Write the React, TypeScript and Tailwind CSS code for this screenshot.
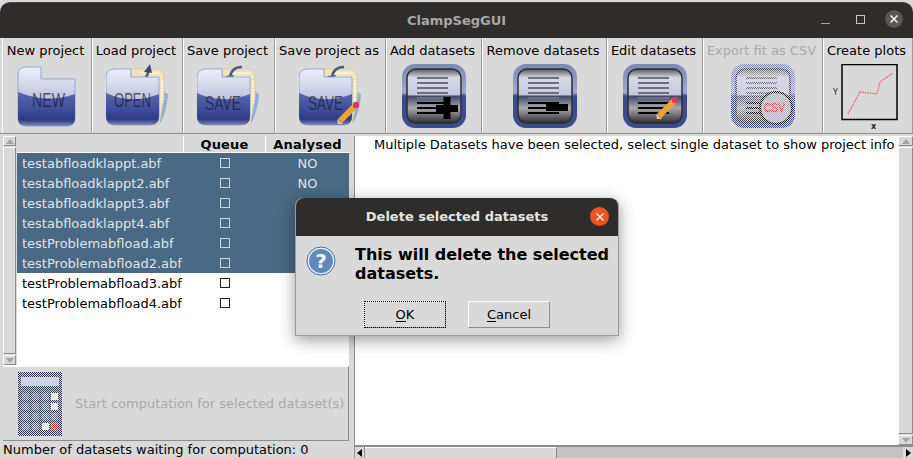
import type { ReactNode } from "react";

const font = { fontFamily: '"DejaVu Sans", sans-serif' };

// folder body, shared by the four project buttons
function FolderIcon({
  label,
  textX,
  textW,
  baseline,
  back,
  pencil,
  arrow,
}: {
  label: string;
  textX: number;
  textW: number;
  baseline: number;
  back?: boolean;
  pencil?: boolean;
  arrow?: "up" | "back";
}) {
  return (
    <svg width="64" height="64" viewBox="0 0 64 64">
      {back && (
        <>
          <path d="M52 24 L62 30 Q61 46 55 58 L46 60z" fill="#8fb0d2" />
          <path d="M25 5H50Q58 5 58 13V34L53 60H30z" fill="#efe3bd" stroke="#d9cfa8" />
          <path d="M34 9H54M36 13H56" stroke="#fbf6e4" strokeWidth="1.5" />
          <path d="M56 16V40" stroke="#fbf6e4" strokeWidth="2" strokeDasharray="2 1" />
        </>
      )}
      {arrow === "up" && <path d="M33 15Q42 16 42 7" stroke="#4b5a80" strokeWidth="2.5" fill="none" />}
      {arrow === "up" && <path d="M38 8L44 0L46 9z" fill="#3d4a70" />}
      {arrow === "back" && <path d="M33 14Q34 3 45 3" stroke="#4b5a80" strokeWidth="2.5" fill="none" />}
      {arrow === "back" && <path d="M28 12L37 11L34 17z" fill="#4b5a80" />}
      <path
        d={back ? "M9 5H25V13H53V52Q53 61 44 61H9Q0 61 0 52V14Q0 5 9 5z" : "M11 3H26V15H60V54Q60 62 52 62H11Q3 62 3 54V11Q3 3 11 3z"}
        fill="url(#folderLight)"
        stroke="#8fadcf"
      />
      <path
        d={back ? "M0 29Q26 41 53 30V52Q53 61 44 61H9Q0 61 0 52z" : "M3 28Q32 40 60 30V54Q60 62 52 62H11Q3 62 3 54z"}
        fill="url(#folderDark)"
      />
      <text x={textX} y={baseline} fontSize="20" fontFamily="Liberation Sans" fill="#15192a" fillOpacity="0.7" textLength={textW} lengthAdjust="spacingAndGlyphs">
        {label}
      </text>
      {pencil && <Pencil x1={41} y1={57} x2={56} y2={42} />}
    </svg>
  );
}

function Pencil({ x1, y1, x2, y2 }: { x1: number; y1: number; x2: number; y2: number }) {
  return (
    <>
      <path d={`M${x1} ${y1}L${x2} ${y2}`} stroke="#eda531" strokeWidth="6" strokeLinecap="butt" />
      <path d={`M${x1 - 2} ${y1 + 3}L${x1 - 3} ${y1 - 2}L${x1 + 3} ${y1 + 3}z`} fill="#e7c68f" />
      <circle cx={x2 + 1} cy={y2 - 1} r="3.2" fill="#d63c60" />
    </>
  );
}

// document buttons: add, remove, edit and the disabled export
function DocIcon({ children }: { children?: ReactNode }) {
  return (
    <>
      <rect x="0" y="0" width="64" height="64" rx="13" fill="url(#docFrame)" />
      <rect x="5" y="5" width="54" height="54" rx="9" fill="url(#docFace)" stroke="#2e2e30" strokeWidth="1.5" />
      {[14, 19, 24, 29, 34].map((y) => (
        <rect key={y} x="15" y={y - 1} width="31" height="2" fill="#6f6f74" />
      ))}
      {[38, 43, 48].map((y) => (
        <rect key={y} x="15" y={y} width="31" height="2" fill="#000" />
      ))}
      {children}
    </>
  );
}

function DocSvg({ children }: { children?: ReactNode }) {
  return (
    <svg width="64" height="64" viewBox="0 0 64 64">
      {children}
    </svg>
  );
}

function CalcIcon() {
  const rows = [395, 405, 415, 425];
  const cols = [25, 35, 45, 54];
  return (
    <svg width="44" height="64" viewBox="18 371 44 64" shapeRendering="crispEdges" className="shrink-0">
      <rect x="18" y="371" width="44" height="64" fill="#2a3350" />
      <rect x="21" y="376" width="38" height="9" fill="#c5cce0" />
      {rows.map((y, r) =>
        cols.map((x, c) => {
          const white = (c === 3 && r < 2) || (c === 2 && r === 3);
          const red = c === 3 && r === 3;
          return <rect key={`${r}-${c}`} x={x - 3} y={y - 3} width="7" height="7" fill={red ? "#e03030" : white ? "#ffffff" : "#5c6480"} />;
        })
      )}
      <rect x="18" y="371" width="44" height="64" fill="url(#dither)" />
    </svg>
  );
}

function ToolButton({ label, width, disabled, children }: { label: string; width: string; disabled?: boolean; children: ReactNode }) {
  return (
    <div className={`${width} shrink-0 flex flex-col items-center border-r border-r-[#9c9c9c] border-l border-l-white`}>
      <div className={`h-[26px] pr-[3px] leading-[26px] text-[13px] whitespace-nowrap ${disabled ? "text-[#a8a8a8]" : "text-black"}`}>{label}</div>
      {children}
    </div>
  );
}

function Arrow({ dir, muted = true }: { dir: "up" | "down" | "left" | "right"; muted?: boolean }) {
  const pts = { up: "0,5 4,0 8,5", down: "0,0 8,0 4,5", left: "5,0 5,8 0,4", right: "0,0 0,8 5,4" }[dir];
  const box = dir === "up" || dir === "down" ? "0 0 8 5" : "0 0 5 8";
  const size = dir === "up" || dir === "down" ? { w: 8, h: 5 } : { w: 5, h: 8 };
  return (
    <svg width={size.w} height={size.h} viewBox={box}>
      <polygon points={pts} fill={muted ? "#a3a3a3" : "#000"} />
    </svg>
  );
}

function VScroll({ width }: { width: string }) {
  return (
    <div className={`${width} shrink-0 flex flex-col gap-px`}>
      <div className="h-[10px] flex items-center justify-center border border-t-white border-l-white border-r-[#8c8c8c] border-b-[#8c8c8c]">
        <Arrow dir="up" />
      </div>
      <div className="flex-1 border border-t-white border-l-white border-r-[#8c8c8c] border-b-[#8c8c8c]" />
      <div className="h-[10px] flex items-center justify-center border border-t-white border-l-white border-r-[#8c8c8c] border-b-[#8c8c8c]">
        <Arrow dir="down" />
      </div>
    </div>
  );
}

const files = [
  ["testabfloadklappt.abf", true],
  ["testabfloadklappt2.abf", true],
  ["testabfloadklappt3.abf", true],
  ["testabfloadklappt4.abf", true],
  ["testProblemabfload.abf", true],
  ["testProblemabfload2.abf", true],
  ["testProblemabfload3.abf", false],
  ["testProblemabfload4.abf", false],
] as const;

export default function App() {
  return (
    <div className="relative w-[913px] h-[458px] overflow-hidden bg-[#d9d9d9] text-black" style={font}>
      {/* shared paints for the icons */}
      <svg className="absolute w-0 h-0">
        <defs>
          <linearGradient id="folderLight" x1="0" y1="0" x2="0" y2="1">
            <stop offset="0" stopColor="#eef0fa" />
            <stop offset="0.6" stopColor="#b9bedb" />
          </linearGradient>
          <linearGradient id="folderDark" x1="0" y1="0" x2="0" y2="1">
            <stop offset="0" stopColor="#5a67b0" />
            <stop offset="0.55" stopColor="#3d4c9a" />
            <stop offset="0.82" stopColor="#2c3a80" />
            <stop offset="1" stopColor="#8289bd" />
          </linearGradient>
          <linearGradient id="docFrame" x1="0" y1="0" x2="0" y2="1">
            <stop offset="0" stopColor="#7d88b8" />
            <stop offset="0.45" stopColor="#a0a8cc" />
            <stop offset="0.5" stopColor="#3c4a8e" />
            <stop offset="1" stopColor="#3c4a8e" />
          </linearGradient>
          <linearGradient id="docFace" x1="0" y1="0" x2="0" y2="1">
            <stop offset="0" stopColor="#55555a" />
            <stop offset="0.16" stopColor="#d7d8e8" />
            <stop offset="0.48" stopColor="#c6c8e0" />
            <stop offset="0.5" stopColor="#3e4668" />
            <stop offset="0.72" stopColor="#a9a9ae" />
            <stop offset="1" stopColor="#2f2f33" />
          </linearGradient>
          <pattern id="dither" width="2" height="2" patternUnits="userSpaceOnUse">
            <rect x="0" y="0" width="1" height="1" fill="#d9d9d9" />
            <rect x="1" y="1" width="1" height="1" fill="#d9d9d9" />
          </pattern>
        </defs>
      </svg>

      {/* title bar */}
      <div className="h-[38px] pt-[2px] bg-[#d9d9d9]">
        <div className="relative h-[36px] rounded-t-[10px] bg-[#2f2d2c] flex items-center justify-center border-t border-[#4a4847]">
          <span className="text-[13px] font-bold text-[#a9a7a3]">ClampSegGUI</span>
          <div className="absolute right-[10px] top-[7px] flex items-center">
            <svg width="9" height="9" viewBox="0 0 9 9">
              <rect x="0" y="8" width="9" height="1" fill="#a9a7a3" />
            </svg>
            <svg width="9" height="9" viewBox="0 0 9 9" fill="none" className="ml-[26px]">
              <rect x="0.5" y="0.5" width="8" height="8" stroke="#c9c7c3" />
            </svg>
            <div className="ml-[20px] w-[18px] h-[18px] rounded-full bg-[#5a5856] flex items-center justify-center">
              <svg width="8" height="8" viewBox="0 0 8 8" stroke="#f2f2f2" strokeWidth="1.5">
                <path d="M0.5 0.5L7.5 7.5M7.5 0.5L0.5 7.5" />
              </svg>
            </div>
          </div>
        </div>
      </div>

      {/* toolbar */}
      <div className="h-[96px] pl-[2px] flex border-b border-[#8c8c8c]">
        <ToolButton label="New project" width="w-[90px]">
          <FolderIcon label="NEW" textX={17} textW={33} baseline={43} />
        </ToolButton>
        <ToolButton label="Load project" width="w-[91px]">
          <FolderIcon label="OPEN" textX={8} textW={37} baseline={43} back arrow="up" />
        </ToolButton>
        <ToolButton label="Save project" width="w-[92px]">
          <FolderIcon label="SAVE" textX={8} textW={36} baseline={46} back arrow="back" />
        </ToolButton>
        <ToolButton label="Save project as" width="w-[111px]">
          <FolderIcon label="SAVE" textX={9} textW={35} baseline={46} back arrow="back" pencil />
        </ToolButton>
        <ToolButton label="Add datasets" width="w-[96px]">
          <DocSvg>
            <DocIcon>
              <rect x="34" y="41" width="22" height="7" fill="#000" />
              <rect x="41.5" y="33" width="7" height="22" fill="#000" />
            </DocIcon>
          </DocSvg>
        </ToolButton>
        <ToolButton label="Remove datasets" width="w-[125px]">
          <DocSvg>
            <DocIcon>
              <rect x="33" y="40" width="22" height="7" fill="#000" />
            </DocIcon>
          </DocSvg>
        </ToolButton>
        <ToolButton label="Edit datasets" width="w-[96px]">
          <DocSvg>
            <DocIcon>
              <Pencil x1={36} y1={52} x2={51} y2={37} />
            </DocIcon>
          </DocSvg>
        </ToolButton>
        <ToolButton label="Export fit as CSV" width="w-[120px]" disabled>
          <DocSvg>
            <DocIcon>
              <circle cx="45" cy="44" r="16" fill="#b4b4c2" stroke="#000" strokeWidth="2" />
              <text x="33" y="48" fontSize="12" fontFamily="Liberation Sans" fill="#f0151e" stroke="#f0151e" strokeWidth="0.4" textLength="21" lengthAdjust="spacingAndGlyphs">
                CSV
              </text>
            </DocIcon>
            <rect x="0" y="0" width="64" height="64" fill="url(#dither)" />
          </DocSvg>
        </ToolButton>
        <ToolButton label="Create plots" width="flex-1">
          <svg width="70" height="66" viewBox="0 0 70 66">
            <rect x="9" y="0.5" width="55" height="55" fill="none" stroke="#000" strokeWidth="1.5" />
            <polyline points="15,50 27,28 44,30 47,18 60,9" fill="none" stroke="#ee5a68" strokeWidth="1.3" strokeDasharray="1.5 1" />
            <text x="0" y="31" fontSize="8" fill="#222" fontFamily="DejaVu Sans">Y</text>
            <text x="38" y="65" fontSize="8" fontWeight="bold" fill="#222" fontFamily="DejaVu Sans">x</text>
          </svg>
        </ToolButton>
      </div>

      {/* main area */}
      <div className="h-[324px] pl-[3px] pt-[2px] flex">
        {/* left pane */}
        <div className="w-[346px] shrink-0 flex flex-col">
          <div className="h-[230px] shrink-0 flex border-b border-white">
            <VScroll width="w-[13px]" />
            <div className="w-px" />
            <div className="flex-1 bg-white flex flex-col min-w-0">
              <div className="h-[17px] flex bg-[#d9d9d9] text-[13px] tracking-[0.2px] font-bold leading-[17px] border-b border-white">
                <div className="w-[167px] border-r border-white" />
                <div className="w-[82px] text-center border-r border-white">Queue</div>
                <div className="flex-1 text-center">Analysed</div>
              </div>
              {files.map(([name, selected], i) => (
                <div key={name} className={`h-[20px] flex text-[13px] leading-[21px] ${selected ? "bg-[#4a6984] text-[#dfe5ea]" : "bg-white text-black"}`}>
                  <div className="w-[167px] pl-[5px] whitespace-nowrap">{name}</div>
                  <div className="w-[82px] flex items-center justify-center">
                    <div className={`w-[10px] h-[10px] border ${selected ? "border-[#cfd6dd]" : "border-[#2a1c1c]"}`} />
                  </div>
                  {/* the rest of this column lies behind the dialog */}
                  <div className="flex-1 text-center">{i < 3 ? "NO" : ""}</div>
                </div>
              ))}
            </div>
          </div>
          {/* start button */}
          <div className="h-[75px] shrink-0 flex items-center pl-[15px] gap-[13px] border-b border-r border-[#8c8c8c] border-t border-t-white">
            <CalcIcon />
            <span className="text-[13px] text-[#a8a8a8] whitespace-nowrap">Start computation for selected dataset(s)</span>
          </div>
          <div className="h-[17px] shrink-0 text-[13px] leading-[18px] whitespace-nowrap">Number of datasets waiting for computation: 0</div>
        </div>

        {/* right pane */}
        <div className="ml-[5px] flex-1 min-w-0 flex flex-col border-l border-[#8c8c8c]">
          <div className="flex-1 flex min-h-0 border-b-2 border-[#8c8c8c]">
            <div className="flex-1 bg-white pl-[19px] text-[13px] leading-[18px] whitespace-nowrap overflow-hidden">
              Multiple Datasets have been selected, select single dataset to show project info
            </div>
            <VScroll width="w-[15px]" />
          </div>
          <div className="h-[11px] flex bg-[#c3c3c3]">
            <div className="w-[10px] flex items-center justify-center bg-[#d9d9d9] border-r border-[#8c8c8c]">
              <Arrow dir="left" muted={false} />
            </div>
            <div className="w-[192px] bg-[#d9d9d9] border-t border-t-white border-r border-r-[#8c8c8c]" />
            <div className="flex-1" />
            <div className="w-[10px] flex items-center justify-center bg-[#d9d9d9]">
              <Arrow dir="right" muted={false} />
            </div>
          </div>
        </div>
      </div>

      {/* delete dialog */}
      <div className="absolute left-[295px] top-[198px] w-[324px] h-[138px] rounded-t-[8px] bg-[#d9d9d9] border border-[#9a9a9a] border-t-0 shadow-[0_4px_16px_rgba(0,0,0,0.4)] flex flex-col">
        <div className="relative h-[38px] shrink-0 rounded-t-[8px] bg-[#2f2d2c] flex items-center justify-center">
          <span className="text-[13px] font-bold text-[#e4e4e2]">Delete selected datasets</span>
          <div className="absolute right-[9px] top-[9px] w-[19px] h-[19px] rounded-full bg-[#e95420] flex items-center justify-center">
            <svg width="8" height="8" viewBox="0 0 8 8" stroke="#fff" strokeWidth="1.2">
              <path d="M0.5 0.5L7.5 7.5M7.5 0.5L0.5 7.5" />
            </svg>
          </div>
        </div>
        <div className="flex pl-[10px] pt-[9px]">
          <svg width="30" height="30" viewBox="0 0 30 30" className="mt-[1px] shrink-0">
            <circle cx="15" cy="15" r="14" fill="#eef1f6" stroke="#3f69a3" strokeWidth="1" />
            <circle cx="15" cy="15" r="12" fill="#5f88bd" />
            <text x="15" y="22" textAnchor="middle" fontSize="20" fontWeight="bold" fontFamily="DejaVu Sans" fill="#f4f6f9">?</text>
          </svg>
          <div className="ml-[19px] w-[262px] text-base font-bold leading-[19px]">This will delete the selected datasets.</div>
        </div>
        <div className="mt-[18px] flex justify-center gap-[22px]">
          <button className="w-[82px] h-[27px] text-[13px] leading-[24px] border border-[#8c8c8c] border-t-white border-l-white outline-1 outline-dotted outline-offset-[-1px] outline-black">
            <span className="underline underline-offset-2">O</span>K
          </button>
          <button className="w-[82px] h-[27px] text-[13px] leading-[24px] border border-[#8c8c8c] border-t-white border-l-white">
            <span className="underline underline-offset-2">C</span>ancel
          </button>
        </div>
      </div>
    </div>
  );
}
